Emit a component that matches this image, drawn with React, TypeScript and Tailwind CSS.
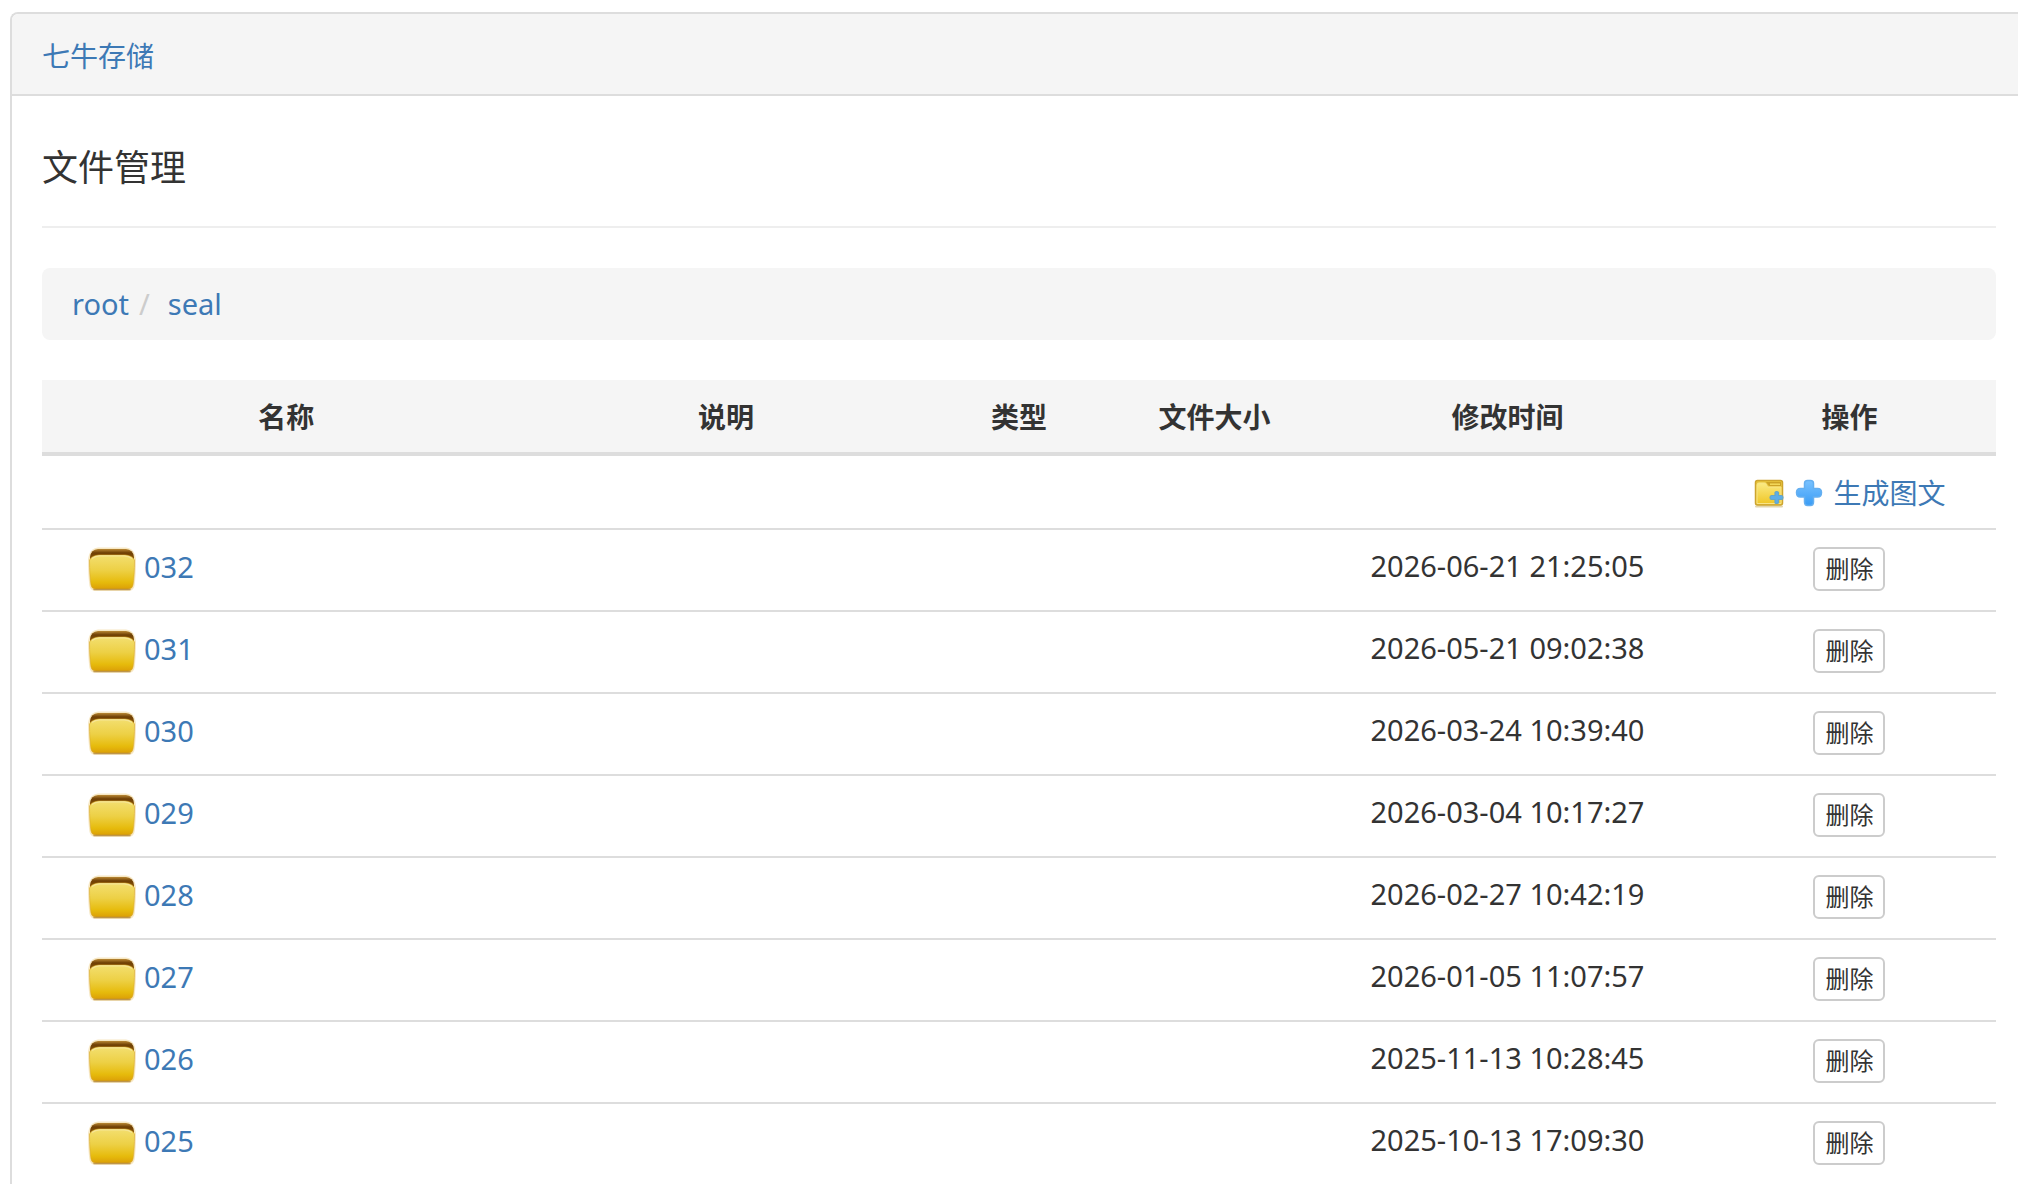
interface FileItem {
  name: string
  updatedAt: string
}

const COLUMNS = [
  { label: '名称', width: 'w-[25%]' },
  { label: '说明', width: 'w-[20%]' },
  { label: '类型', width: 'w-[10%]' },
  { label: '文件大小', width: 'w-[10%]' },
  { label: '修改时间', width: 'w-[20%]' },
  { label: '操作', width: 'w-[15%]' },
]

const FILES: FileItem[] = [
  { name: '032', updatedAt: '2026-06-21 21:25:05' },
  { name: '031', updatedAt: '2026-05-21 09:02:38' },
  { name: '030', updatedAt: '2026-03-24 10:39:40' },
  { name: '029', updatedAt: '2026-03-04 10:17:27' },
  { name: '028', updatedAt: '2026-02-27 10:42:19' },
  { name: '027', updatedAt: '2026-01-05 11:07:57' },
  { name: '026', updatedAt: '2025-11-13 10:28:45' },
  { name: '025', updatedAt: '2025-10-13 17:09:30' },
]

const LINK = 'text-[#3d79b5] hover:underline'

function FolderIcon() {
  return (
    <svg className="w-12 h-12" viewBox="0 0 48 48" aria-hidden="true">
      <defs>
        <linearGradient id="folder-front" x1="0" y1="0" x2="0" y2="1">
          <stop offset="0" stopColor="#f3df70" />
          <stop offset="0.45" stopColor="#edd045" />
          <stop offset="0.8" stopColor="#e6bb0c" />
          <stop offset="1" stopColor="#dc9f06" />
        </linearGradient>
        <linearGradient id="folder-back" x1="0" y1="0" x2="0" y2="1">
          <stop offset="0" stopColor="#b98834" />
          <stop offset="0.3" stopColor="#6f3f04" />
          <stop offset="0.5" stopColor="#7a4805" />
          <stop offset="1" stopColor="#b07c20" />
        </linearGradient>
      </defs>
      <path d="M1 9Q3 2 10 1.500H38Q45 2 47 9L48 13Q48 30 46.500 40Q45.500 45 40 45H8Q2.500 45 1.500 40Q0 30 0 13Z" fill="#f0d28a" opacity="0.5" />
      <path d="M2 11Q3 3.500 10 3H38Q45 3.500 46 11V16H2Z" fill="url(#folder-back)" />
      <path d="M1.500 14Q4 9.500 11 9H37Q44 9.500 46.500 14Q46.500 30 45 39Q44.500 43 40 43H8Q3.500 43 3 39Q1.500 30 1.500 14Z" fill="url(#folder-front)" stroke="#d9a92c" strokeOpacity="0.6" />
      <path d="M6 43.500H42" stroke="#a87a2c" strokeOpacity="0.7" strokeWidth="1.500" strokeLinecap="round" />
      <path d="M4 12.500Q7 10 12 9.800H36Q41 10 44 12.500" fill="none" stroke="#f6e596" strokeWidth="1.200" />
    </svg>
  )
}

function NewFolderIcon() {
  return (
    <svg className="w-8 h-8" viewBox="0 0 32 32" aria-hidden="true">
      <defs>
        <linearGradient id="new-folder" x1="0" y1="0" x2="0" y2="1">
          <stop offset="0" stopColor="#fbea83" />
          <stop offset="1" stopColor="#f0c728" />
        </linearGradient>
      </defs>
      <path d="M3 29.500H29" stroke="#e3d6ac" strokeWidth="2" strokeLinecap="round" />
      <rect x="2.500" y="3.500" width="27" height="24.500" rx="2" fill="#e8c63c" stroke="#cda42e" strokeWidth="1.500" />
      <path d="M13 5H28V9H16Z" fill="#cda327" />
      <path d="M17 7.200H27" stroke="#f4da5c" strokeWidth="1.500" />
      <path d="M4 8Q4 6 6 6H11.500Q13 6 13.500 7.500L14.500 10H28V26.500H4Z" fill="url(#new-folder)" stroke="#f8e487" />
      <path d="M22 15.500Q22 14.500 23.700 14.500T25.500 15.500V18.500H28.500Q30 18.500 30 20.500T28.500 22.500H25.500V25.500Q25.500 26.500 23.700 26.500T22 25.500V22.500H18.500Q17 22.500 17 20.500T18.500 18.500H22Z" fill="#5dade8" stroke="#64a6c8" strokeWidth="1.200" strokeLinejoin="round" />
    </svg>
  )
}

function PlusIcon() {
  return (
    <svg className="w-8 h-8" viewBox="0 0 32 32" aria-hidden="true">
      <defs>
        <linearGradient id="plus-fill" x1="0" y1="0" x2="0" y2="1">
          <stop offset="0" stopColor="#79c2ff" />
          <stop offset="1" stopColor="#399cf5" />
        </linearGradient>
      </defs>
      <path
        d="M14.500 3.500H17.500Q20.500 3.500 20.500 6.500V11.500H24.500Q28.500 11.500 28.500 15.500Q28.500 20 24.500 20H20.500V25Q20.500 28.500 17.500 28.500H14.500Q11.500 28.500 11.500 25V20H7.500Q3.500 20 3.500 15.500Q3.500 11.500 7.500 11.500H11.500V6.500Q11.500 3.500 14.500 3.500Z"
        fill="url(#plus-fill)"
        stroke="#65aff0"
        strokeWidth="1.500"
      />
    </svg>
  )
}

export default function App() {
  return (
    <div className="min-h-screen flex bg-white pt-3 pl-[10px] overflow-hidden text-[28px] leading-10 text-[#333] font-['Noto_Sans','Noto_Sans_CJK_SC',sans-serif]">
      <div className="flex-1 min-w-0 border-2 border-r-0 border-b-0 border-[#ddd] rounded-tl-lg">
        <div className="px-[30px] pt-[22px] pb-[18px] bg-[#f5f5f5] border-b-2 border-[#ddd] rounded-tl-md">
          <a href="#" className={`block ${LINK}`}>七牛存储</a>
        </div>

        <div className="pl-[30px] pr-[22px]">
          <h3 className="pt-[52px] pb-[38px] text-[36px] leading-10 border-b-2 border-[#eee]">文件管理</h3>

          <nav aria-label="breadcrumb" className="mt-10">
            <ol className="flex px-[30px] py-4 text-[29px] bg-[#f5f5f5] rounded-lg">
              <li><a href="#" className={LINK}>root</a></li>
              <li className="flex">
                <span className="pl-[10px] pr-[18px] text-[#ccc]">/</span>
                <a href="#" className={LINK}>seal</a>
              </li>
            </ol>
          </nav>

          <table className="mt-10 w-full table-fixed border-collapse">
            <thead>
              <tr className="bg-[#f5f5f5] border-b-4 border-[#ddd]">
                {COLUMNS.map((col) => (
                  <th key={col.label} scope="col" className={`${col.width} h-[74px] p-0 pt-[2px] font-bold text-center`}>
                    {col.label}
                  </th>
                ))}
              </tr>
            </thead>
            <tbody>
              <tr className="border-b-2 border-[#ddd]">
                <td colSpan={5} />
                <td className="h-[75px] p-0 pt-[2px]">
                  <div className="flex items-center justify-center gap-2">
                    <a href="#" aria-label="新建文件夹"><NewFolderIcon /></a>
                    <a href="#" aria-label="上传文件"><PlusIcon /></a>
                    <a href="#" className={`${LINK} whitespace-nowrap`}>生成图文</a>
                  </div>
                </td>
              </tr>
              {FILES.map((file) => (
                <tr key={file.name} className="border-b-2 border-[#ddd]">
                  <td className="h-[82px] p-0 pl-[46px]">
                    <a href="#" className={`flex items-center gap-2 text-[29px] ${LINK}`}>
                      <FolderIcon />
                      <span className="pb-[6px]">{file.name}</span>
                    </a>
                  </td>
                  <td />
                  <td />
                  <td />
                  <td className="p-0 pb-2 text-center text-[29px] whitespace-nowrap">{file.updatedAt}</td>
                  <td className="p-0 pb-1 text-center">
                    <button
                      type="button"
                      className="inline-flex items-center justify-center w-[72px] h-11 align-middle text-2xl bg-white border-2 border-[#ccc] rounded-md hover:bg-gray-100"
                    >
                      删除
                    </button>
                  </td>
                </tr>
              ))}
            </tbody>
          </table>
        </div>
      </div>
    </div>
  )
}
